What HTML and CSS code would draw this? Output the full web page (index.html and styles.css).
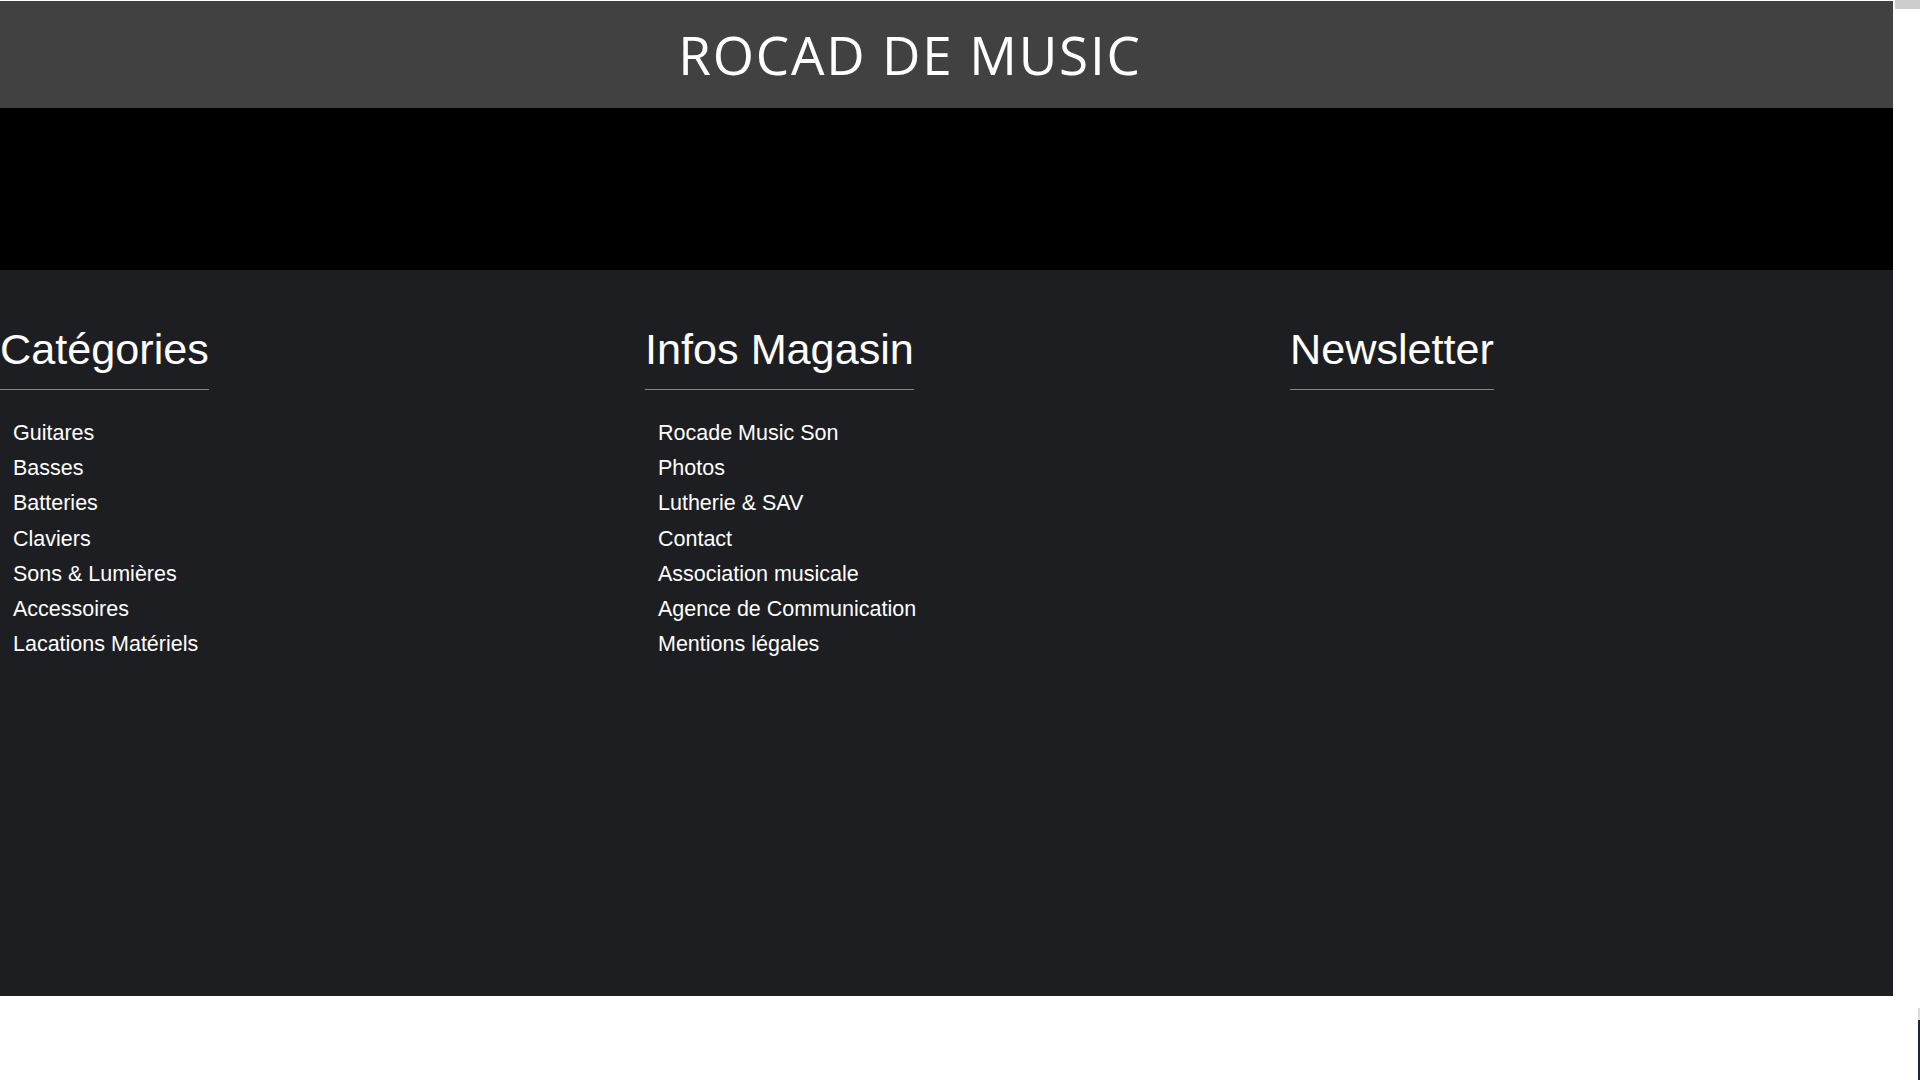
FILE: index.html
```html
<!DOCTYPE html>
<html lang="fr">
<head>
<meta charset="utf-8">
<title>Rocad de Music</title>
<link rel="stylesheet" href="styles.css">
</head>
<body>
<div class="page">
  <header class="site-header">
    <h1 class="site-title">ROCAD DE MUSIC</h1>
  </header>
  <div class="hero"></div>
  <footer class="site-footer">
    <section class="footer-col">
      <h2 class="footer-title">Catégories</h2>
      <ul class="footer-links">
        <li>Guitares</li>
        <li>Basses</li>
        <li>Batteries</li>
        <li>Claviers</li>
        <li>Sons &amp; Lumières</li>
        <li>Accessoires</li>
        <li>Lacations Matériels</li>
      </ul>
    </section>
    <section class="footer-col">
      <h2 class="footer-title">Infos Magasin</h2>
      <ul class="footer-links">
        <li>Rocade Music Son</li>
        <li>Photos</li>
        <li>Lutherie &amp; SAV</li>
        <li>Contact</li>
        <li>Association musicale</li>
        <li>Agence de Communication</li>
        <li>Mentions légales</li>
      </ul>
    </section>
    <section class="footer-col">
      <h2 class="footer-title">Newsletter</h2>
    </section>
  </footer>
</div>
<div class="corner-top"></div>
<div class="corner-bottom"></div>
</body>
</html>
```

FILE: styles.css
```css
html, body {
  margin: 0;
  padding: 0;
  background: #ffffff;
}
body {
  padding-top: 1px;
  overflow: hidden;
  font-family: "Liberation Sans", Arial, sans-serif;
}
.page {
  width: 1893px;
}
.site-header {
  height: 107px;
  box-sizing: border-box;
  background: #414141;
  display: flex;
  justify-content: center;
  padding: 17px 73px 0 0;
}
.site-title {
  margin: 0;
  font-family: "Open Sans", sans-serif;
  font-weight: 400;
  font-size: 53px;
  line-height: normal;
  letter-spacing: 1.8px;
  color: #ffffff;
}
.hero {
  height: 162px;
  background: #000000;
}
.site-footer {
  height: 726px;
  box-sizing: border-box;
  background: #1d1e22;
  display: grid;
  grid-template-columns: 645px 645px 603px;
  align-items: start;
  padding-top: 55px;
}
.footer-col {
  display: flex;
  flex-direction: column;
  align-items: flex-start;
}
.footer-title {
  margin: 0;
  font-size: 43.2px;
  font-weight: 400;
  line-height: normal;
  color: #ffffff;
  padding-bottom: 15px;
  border-bottom: 1px solid #86868a;
}
.footer-links {
  list-style: none;
  margin: 26px 0 0;
  padding: 0 0 0 13px;
}
.footer-links li {
  font-size: 21.5px;
  line-height: 35.2px;
  color: #ffffff;
}
.corner-top {
  position: fixed;
  top: 0;
  right: 0;
  width: 25px;
  height: 9px;
  background: #cdcdcd;
}
.corner-bottom {
  position: fixed;
  right: 0;
  top: 1008px;
  width: 2px;
  height: 72px;
  background: linear-gradient(#dadada 0 12px, #1b2542 12px);
}
```
